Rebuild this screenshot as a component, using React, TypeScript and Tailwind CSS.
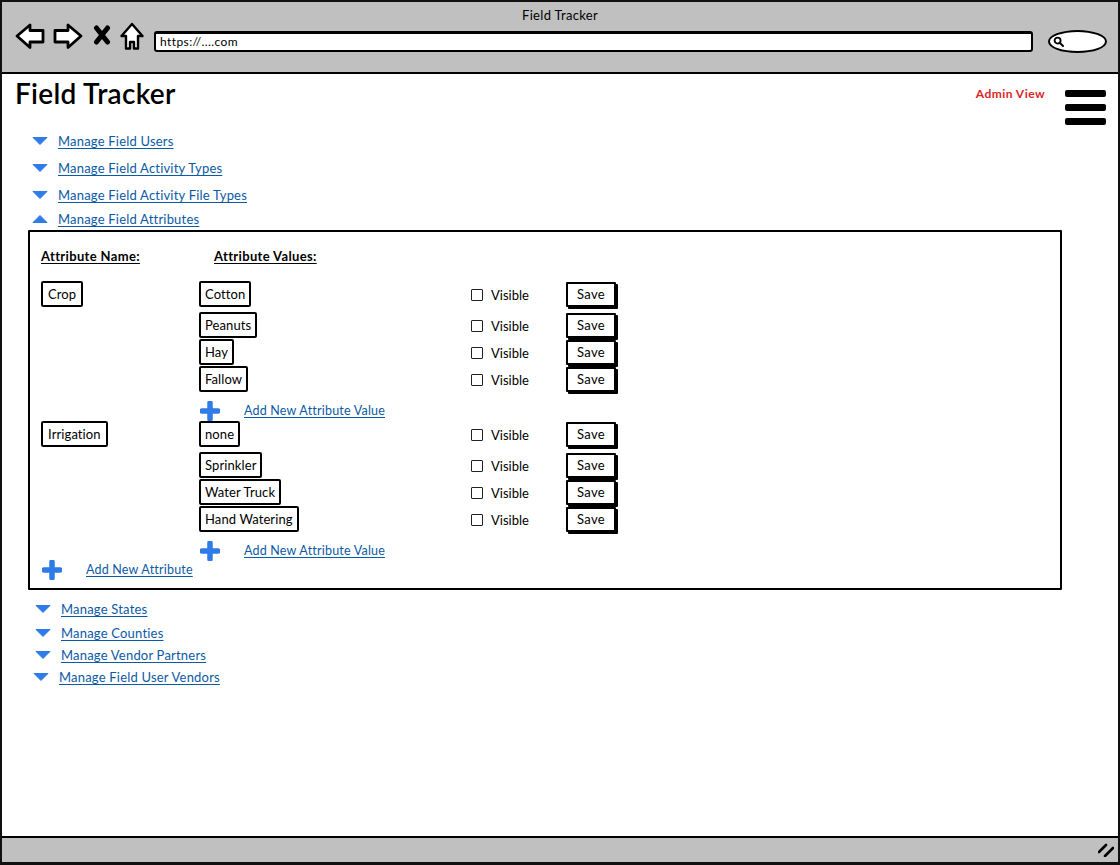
const font = "[font-family:Lato,'Noto_Sans',sans-serif]";

function Caret({ up = false }: { up?: boolean }) {
  return (
    <svg width="16" height="10" viewBox="0 0 16 10" className="shrink-0">
      <path d={up ? "M1 8.5 L8 1.5 L15 8.5 Z" : "M1 1.5 L15 1.5 L8 8.5 Z"} fill="#2f7be8" stroke="#2f7be8" strokeLinejoin="round" />
    </svg>
  );
}

function Plus() {
  return (
    <svg width="20" height="20" viewBox="0 0 20 20" className="shrink-0">
      <path d="M10 2 V18 M2 10 H18" stroke="#2f7be8" strokeWidth="5.5" strokeLinecap="round" />
    </svg>
  );
}

function NavRow({ label, className, up }: { label: string; className: string; up?: boolean }) {
  return (
    <div className={"flex items-center gap-[10px] " + className}>
      <Caret up={up} />
      <span className="text-[13px] leading-4 tracking-[0.2px] text-[#0b5aa5] underline underline-offset-2">{label}</span>
    </div>
  );
}

function NameBox({ children }: { children: string }) {
  return (
    <div className="flex h-[26px] w-fit items-center rounded-[2px] border-2 border-black bg-white px-[5px] text-[13px] leading-4 tracking-[0.1px] text-black">
      {children}
    </div>
  );
}

function ValueBox({ children }: { children: string }) {
  return (
    <div className="flex h-[26px] w-fit items-center rounded-[2px] border-2 border-black bg-white px-[4px] text-[13px] leading-4 tracking-[0.1px] text-black">
      {children}
    </div>
  );
}

function ValueRow({ name, className }: { name: string; className: string }) {
  return (
    <div className={"grid h-[26px] grid-cols-[272px_95px_52px] items-center " + className}>
      <ValueBox>{name}</ValueBox>
      <div className="flex items-center gap-[8px] pt-[2px] text-[13px] text-black">
        <span className="h-[12px] w-[12px] rounded-[1px] border border-[#222] bg-white" />
        <span className="mt-[2px]">Visible</span>
      </div>
      <div className="flex h-[25px] w-[50px] items-center justify-center rounded-[1px] border-2 border-black bg-white pt-[1px] text-[13px] tracking-[0.3px] text-black shadow-[2px_2px_0_#000]">
        Save
      </div>
    </div>
  );
}

function AddRow({ label, className }: { label: string; className: string }) {
  return (
    <div className={"flex h-[20px] items-center gap-[24px] " + className}>
      <Plus />
      <span className="text-[12.5px] leading-4 tracking-[0.2px] text-[#0b5aa5] underline underline-offset-2">{label}</span>
    </div>
  );
}

export default function App() {
  return (
    <div className={"flex h-[865px] w-[1120px] flex-col border-2 border-b-[3px] border-[#111] bg-white " + font}>
      {/* browser chrome */}
      <div className="h-[72px] shrink-0 border-b-2 border-black bg-[#c0c0c0]">
        <div className="pt-[5px] text-center text-[13px] leading-4 tracking-[0.3px] text-black">Field Tracker</div>
        <div className="-mt-[1px] flex items-start pl-[13px]">
          <svg width="30" height="28" viewBox="0 0 30 28" className="shrink-0">
            <path d="M2 14 L15 3 L15 8.5 L28 8.5 L28 20 L15 20 L15 25.5 Z" fill="#fff" stroke="#000" strokeWidth="2.8" strokeLinejoin="round" />
          </svg>
          <svg width="30" height="28" viewBox="0 0 30 28" className="ml-[8px] shrink-0">
            <path d="M28 14 L15 3 L15 8.5 L2 8.5 L2 20 L15 20 L15 25.5 Z" fill="#fff" stroke="#000" strokeWidth="2.8" strokeLinejoin="round" />
          </svg>
          <svg width="18" height="20" viewBox="0 0 18 20" className="mt-[3px] ml-[10px] shrink-0">
            <path d="M3.5 3 L14.5 17 M14.5 3 L3.5 17" stroke="#000" strokeWidth="5" strokeLinecap="round" />
          </svg>
          <svg width="24" height="29" viewBox="0 0 24 29" className="ml-[9px] shrink-0">
            <path d="M12 2 L22.5 14 L18 14 L18 26.5 L14 26.5 L14 20 L10 20 L10 26.5 L6 26.5 L6 14 L1.5 14 Z" fill="#fff" stroke="#000" strokeWidth="2.4" strokeLinejoin="round" />
          </svg>
          <div className="mt-[9px] ml-[10px] flex h-[21px] w-[879px] items-center rounded-[3px] border-2 border-t-[3px] border-black bg-white pl-[4px] text-[12px] tracking-[0.4px] text-black">
            https://....com
          </div>
          <div className="mt-[8px] ml-[15px] flex h-[23px] w-[59px] items-center rounded-[50%] border-2 border-black bg-white pl-[3px]">
            <svg width="11" height="11" viewBox="0 0 11 11">
              <circle cx="4.6" cy="4.6" r="3" fill="none" stroke="#000" strokeWidth="1.8" />
              <path d="M7 7 L10 10" stroke="#000" strokeWidth="2" strokeLinecap="round" />
            </svg>
          </div>
        </div>
      </div>

      {/* page */}
      <div className="min-h-0 flex-1">
        <div className="flex justify-between pr-[12px] pl-[13px]">
          <h1 className="text-[28px] leading-[38px] font-semibold tracking-[0.3px] text-black">Field Tracker</h1>
          <div className="flex">
            <span className="mt-[12px] mr-[20px] text-[12px] leading-4 font-bold tracking-[0.45px] text-[#d92626]">Admin View</span>
            <div className="mt-[16px] flex flex-col gap-[7px]">
              <div className="h-[7px] w-[41px] rounded-[2px] bg-black" />
              <div className="h-[7px] w-[41px] rounded-[2px] bg-black" />
              <div className="h-[7px] w-[41px] rounded-[2px] bg-black" />
            </div>
          </div>
        </div>

        <div className="pl-[30px]">
          <NavRow label="Manage Field Users" className="mt-[8px]" />
          <NavRow label="Manage Field Activity Types" className="mt-[11px]" />
          <NavRow label="Manage Field Activity File Types" className="mt-[11px]" />
          <NavRow label="Manage Field Attributes" className="mt-[8px]" up />
        </div>

        <div className="mt-[3px] ml-[26px] h-[360px] w-[1034px] rounded-[1px] border-2 border-black">
          <div className="flex pt-[16px] pl-[11px] text-[13px] leading-4 font-bold tracking-[0.35px] text-black underline underline-offset-2">
            <span className="w-[173px]">Attribute Name:</span>
            <span>Attribute Values:</span>
          </div>

          <div className="mt-[17px] flex pl-[11px]">
            <div className="w-[158px]"><NameBox>Crop</NameBox></div>
            <div>
              <ValueRow name="Cotton" className="" />
              <ValueRow name="Peanuts" className="mt-[5px]" />
              <ValueRow name="Hay" className="mt-[1px]" />
              <ValueRow name="Fallow" className="mt-[1px]" />
              <AddRow label="Add New Attribute Value" className="mt-[9px] ml-[1px]" />
            </div>
          </div>

          <div className="flex pl-[11px]">
            <div className="w-[158px]"><NameBox>Irrigation</NameBox></div>
            <div>
              <ValueRow name="none" className="" />
              <ValueRow name="Sprinkler" className="mt-[5px]" />
              <ValueRow name="Water Truck" className="mt-[1px]" />
              <ValueRow name="Hand Watering" className="mt-[1px]" />
              <AddRow label="Add New Attribute Value" className="mt-[9px] ml-[1px]" />
            </div>
          </div>

          <AddRow label="Add New Attribute" className="-mt-[1px] ml-[12px]" />
        </div>

        <div className="pt-[11px] pl-[33px]">
          <NavRow label="Manage States" className="" />
          <NavRow label="Manage Counties" className="mt-[8px]" />
          <NavRow label="Manage Vendor Partners" className="mt-[6px]" />
          <NavRow label="Manage Field User Vendors" className="mt-[6px] -ml-[2px]" />
        </div>
      </div>

      {/* status bar */}
      <div className="flex h-[26px] shrink-0 items-center justify-end border-t-2 border-black bg-[#c0c0c0] pr-[4px]">
        <svg width="16" height="14" viewBox="0 0 16 14">
          <path d="M1 9 L8 2 M7 13 L15 5" stroke="#000" strokeWidth="2.6" strokeLinecap="round" />
        </svg>
      </div>
    </div>
  );
}
